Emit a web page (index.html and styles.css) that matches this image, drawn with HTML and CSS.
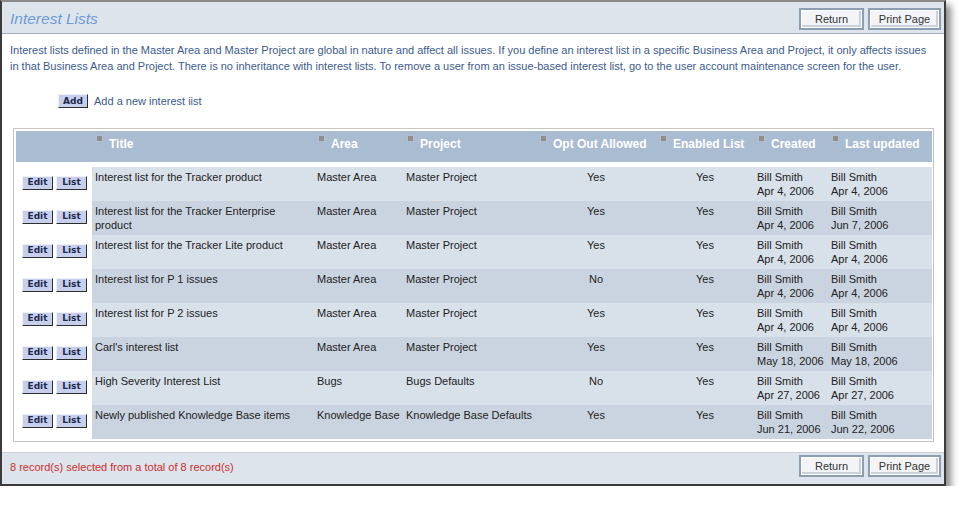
FILE: index.html
```html
<!DOCTYPE html>
<html>
<head>
<meta charset="utf-8">
<title>Interest Lists</title>
<link rel="stylesheet" href="styles.css">
</head>
<body>
<div class="frame">
  <div class="bar bar-top">
    <h1 class="title">Interest Lists</h1>
    <div class="actions">
      <button class="btn btn-return">Return</button>
      <button class="btn btn-print">Print Page</button>
    </div>
  </div>

  <p class="desc">Interest lists defined in the Master Area and Master Project are global in nature and affect all issues. If you define an interest list in a specific Business Area and Project, it only affects issues in that Business Area and Project. There is no inheritance with interest lists. To remove a user from an issue-based interest list, go to the user account maintenance screen for the user.</p>

  <div class="addrow">
    <button class="mini mini-add">Add</button>
    <span class="addlabel">Add a new interest iist</span>
  </div>

  <div class="tablebox">
    <table class="grid">
      <colgroup>
        <col class="c-btn"><col class="c-title"><col class="c-area"><col class="c-proj"><col class="c-opt"><col class="c-en"><col class="c-cre"><col class="c-upd">
      </colgroup>
      <thead>
        <tr>
          <th></th>
          <th><span class="mark"></span>Title</th>
          <th><span class="mark"></span>Area</th>
          <th><span class="mark"></span>Project</th>
          <th><span class="mark"></span>Opt Out Allowed</th>
          <th><span class="mark"></span>Enabled List</th>
          <th><span class="mark"></span>Created</th>
          <th><span class="mark"></span>Last updated</th>
        </tr>
      </thead>
      <tbody>
        <tr>
          <td class="ops"><button class="mini mini-edit">Edit</button><button class="mini mini-list">List</button></td>
          <td>Interest list for the Tracker product</td>
          <td>Master Area</td>
          <td>Master Project</td>
          <td class="ctr">Yes</td>
          <td class="ctr">Yes</td>
          <td>Bill Smith<br>Apr 4, 2006</td>
          <td>Bill Smith<br>Apr 4, 2006</td>
        </tr>
        <tr>
          <td class="ops"><button class="mini mini-edit">Edit</button><button class="mini mini-list">List</button></td>
          <td>Interest list for the Tracker Enterprise product</td>
          <td>Master Area</td>
          <td>Master Project</td>
          <td class="ctr">Yes</td>
          <td class="ctr">Yes</td>
          <td>Bill Smith<br>Apr 4, 2006</td>
          <td>Bill Smith<br>Jun 7, 2006</td>
        </tr>
        <tr>
          <td class="ops"><button class="mini mini-edit">Edit</button><button class="mini mini-list">List</button></td>
          <td>Interest list for the Tracker Lite product</td>
          <td>Master Area</td>
          <td>Master Project</td>
          <td class="ctr">Yes</td>
          <td class="ctr">Yes</td>
          <td>Bill Smith<br>Apr 4, 2006</td>
          <td>Bill Smith<br>Apr 4, 2006</td>
        </tr>
        <tr>
          <td class="ops"><button class="mini mini-edit">Edit</button><button class="mini mini-list">List</button></td>
          <td>Interest list for P 1 issues</td>
          <td>Master Area</td>
          <td>Master Project</td>
          <td class="ctr">No</td>
          <td class="ctr">Yes</td>
          <td>Bill Smith<br>Apr 4, 2006</td>
          <td>Bill Smith<br>Apr 4, 2006</td>
        </tr>
        <tr>
          <td class="ops"><button class="mini mini-edit">Edit</button><button class="mini mini-list">List</button></td>
          <td>Interest list for P 2 issues</td>
          <td>Master Area</td>
          <td>Master Project</td>
          <td class="ctr">Yes</td>
          <td class="ctr">Yes</td>
          <td>Bill Smith<br>Apr 4, 2006</td>
          <td>Bill Smith<br>Apr 4, 2006</td>
        </tr>
        <tr>
          <td class="ops"><button class="mini mini-edit">Edit</button><button class="mini mini-list">List</button></td>
          <td>Carl's interest list</td>
          <td>Master Area</td>
          <td>Master Project</td>
          <td class="ctr">Yes</td>
          <td class="ctr">Yes</td>
          <td>Bill Smith<br>May 18, 2006</td>
          <td>Bill Smith<br>May 18, 2006</td>
        </tr>
        <tr>
          <td class="ops"><button class="mini mini-edit">Edit</button><button class="mini mini-list">List</button></td>
          <td>High Severity Interest List</td>
          <td>Bugs</td>
          <td>Bugs Defaults</td>
          <td class="ctr">No</td>
          <td class="ctr">Yes</td>
          <td>Bill Smith<br>Apr 27, 2006</td>
          <td>Bill Smith<br>Apr 27, 2006</td>
        </tr>
        <tr>
          <td class="ops"><button class="mini mini-edit">Edit</button><button class="mini mini-list">List</button></td>
          <td>Newly published Knowledge Base items</td>
          <td>Knowledge Base</td>
          <td>Knowledge Base Defaults</td>
          <td class="ctr">Yes</td>
          <td class="ctr">Yes</td>
          <td>Bill Smith<br>Jun 21, 2006</td>
          <td>Bill Smith<br>Jun 22, 2006</td>
        </tr>
      </tbody>
    </table>
  </div>

  <div class="bar bar-bottom">
    <span class="count">8 record(s) selected from a total of 8 record(s)</span>
    <div class="actions">
      <button class="btn btn-return">Return</button>
      <button class="btn btn-print">Print Page</button>
    </div>
  </div>
</div>
</body>
</html>
```

FILE: styles.css
```css
html, body {
  margin: 0;
  padding: 0;
  background: #ffffff;
}

body {
  font-family: "Liberation Sans", Arial, sans-serif;
  font-size: 11px;
  color: #222;
}

.frame {
  width: 942px;
  border: 2px solid #3b3b3b;
  border-top-color: #8a8a8a;
  background: #fff;
  box-shadow: 5px 5px 7px rgba(0, 0, 0, 0.45);
  display: flex;
  flex-direction: column;
}

.bar {
  display: flex;
  align-items: flex-start;
  justify-content: space-between;
  background: #dee4ec;
}

.bar-top {
  height: 31px;
  border-bottom: 1px solid #a3adb9;
}

.title {
  margin: 0;
  padding: 8px 0 0 8px;
  font-size: 15.5px;
  font-style: italic;
  font-weight: normal;
  color: #6b9cd6;
  line-height: 18px;
}

.actions {
  display: flex;
  gap: 4px;
  padding: 6px 3px 0 0;
}

.btn {
  height: 22px;
  padding: 0;
  font-family: "Liberation Sans", Arial, sans-serif;
  font-size: 11px;
  color: #333;
  background: #f2f4f7;
  border: 2px solid #8d9db2;
  box-shadow: inset 0 0 0 1px #ffffff, inset -1px -1px 0 2px #c9d2dd;
}

.btn-return { width: 65px; }
.btn-print { width: 73px; }

.desc {
  margin: 8px 12px 0 8px;
  line-height: 16px;
  color: #3b5b8e;
}

.addrow {
  display: flex;
  align-items: center;
  gap: 6px;
  margin: 20px 0 0 56px;
  height: 14px;
}

.addlabel {
  color: #3b5b8e;
}

.mini {
  height: 14px;
  padding: 0;
  font-family: "DejaVu Sans", Verdana, sans-serif;
  font-size: 9px;
  font-weight: bold;
  line-height: 11px;
  color: #1c2a4e;
  background: #c8cfec;
  border: 1px solid;
  border-color: #eef0fa #2e2e2e #2e2e2e #eef0fa;
}

.mini-add { width: 30px; }
.mini-edit { width: 31px; }
.mini-list { width: 31px; margin-left: 3px; }

.tablebox {
  margin: 20px 10px 0 11px;
  border: 1px solid #c4c4c4;
  padding: 2px;
}

.grid {
  width: 100%;
  border-collapse: separate;
  border-spacing: 0;
  table-layout: fixed;
}

.c-btn { width: 76px; }
.c-title { width: 222px; }
.c-area { width: 89px; }
.c-proj { width: 133px; }
.c-opt { width: 120px; }
.c-en { width: 98px; }
.c-cre { width: 74px; }
.c-upd { width: 104px; }

.grid th {
  height: 36px;
  padding: 4px 0 0 4px;
  box-sizing: border-box;
  vertical-align: top;
  text-align: left;
  font-size: 12px;
  font-weight: bold;
  color: #ffffff;
  background: #aabcd1;
  background-clip: padding-box;
  border-bottom: 5px solid #ffffff;
  white-space: nowrap;
  line-height: 15px;
}

.mark {
  display: inline-block;
  width: 5px;
  height: 5px;
  margin-right: 6px;
  vertical-align: 6px;
  background: #8e8e8e;
  border: 1px solid #b5bfcb;
}

.grid td {
  height: 34px;
  box-sizing: border-box;
  padding: 3px 3px 0 3px;
  vertical-align: top;
  line-height: 14px;
  color: #222;
}

.grid tbody tr:nth-child(odd) td { background: #d8e0ea; }
.grid tbody tr:nth-child(even) td { background: #cad4e0; }

.grid td.ops {
  background: #ffffff !important;
  padding: 7px 0 0 6px;
  white-space: nowrap;
}

.grid td.ctr {
  text-align: center;
}

.bar-bottom {
  margin-top: 10px;
  height: 31px;
  border-top: 1px solid #c9d0d9;
}

.bar-bottom .actions {
  padding-top: 2px;
}

.count {
  padding: 8px 0 0 8px;
  color: #c8302f;
  font-size: 11px;
}
```
